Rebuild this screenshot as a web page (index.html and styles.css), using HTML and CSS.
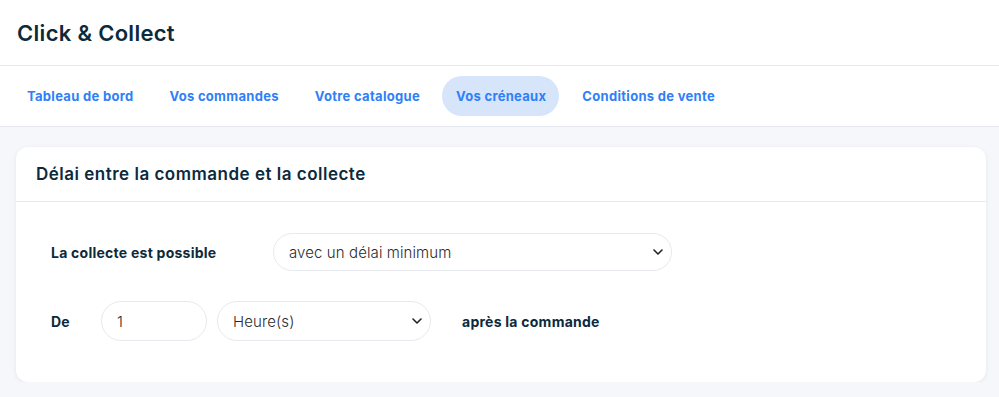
FILE: index.html
```html
<!DOCTYPE html>
<html lang="fr">
<head>
  <meta charset="UTF-8">
  <meta name="viewport" content="width=device-width, initial-scale=1.0">
  <title>Click &amp; Collect</title>
  <link rel="stylesheet" href="styles.css">
</head>
<body>

  <header class="topbar">
    <h1>Click &amp; Collect</h1>
  </header>

  <nav class="tabs">
    <a class="tab" href="#">Tableau de bord</a>
    <a class="tab" href="#">Vos commandes</a>
    <a class="tab" href="#">Votre catalogue</a>
    <a class="tab active" href="#">Vos créneaux</a>
    <a class="tab" href="#">Conditions de vente</a>
  </nav>

  <main class="content">
    <section class="card">
      <div class="card-header">Délai entre la commande et la collecte</div>
      <div class="card-body">
        <div class="row">
          <label class="label label-wide">La collecte est possible</label>
          <div class="select select-wide">
            <span>avec un délai minimum</span>
            <svg class="chevron" viewBox="0 0 10 6" width="10" height="6"><path d="M1 1l4 4 4-4" fill="none" stroke="#222" stroke-width="1.6" stroke-linecap="round" stroke-linejoin="round"/></svg>
          </div>
        </div>
        <div class="row">
          <label class="label label-short">De</label>
          <div class="input">1</div>
          <div class="select select-unit">
            <span>Heure(s)</span>
            <svg class="chevron" viewBox="0 0 10 6" width="10" height="6"><path d="M1 1l4 4 4-4" fill="none" stroke="#222" stroke-width="1.6" stroke-linecap="round" stroke-linejoin="round"/></svg>
          </div>
          <span class="label after">après la commande</span>
        </div>
      </div>
    </section>
  </main>

</body>
</html>
```

FILE: styles.css
```css
body {
  margin: 0;
  font-family: Inter, "Noto Sans", Arial, sans-serif;
  background-color: #f5f7fa;
  color: #0c2a3c;
}
.topbar {
  background-color: #fff;
  height: 65px;
  border-bottom: 1px solid #e8eaee;
  display: flex;
  align-items: center;
  padding: 0 17px;
}
.topbar h1 {
  margin: 0;
  font-size: 22px;
  font-weight: 600;
  letter-spacing: 0.3px;
  color: #0c2a3c;
}
.tabs {
  background-color: #fff;
  height: 60px;
  border-bottom: 1px solid #e6e9ef;
  display: flex;
  align-items: center;
  gap: 9px;
  padding: 0 13px;
}
.tab {
  display: flex;
  align-items: center;
  height: 40px;
  padding: 0 13px 0 14px;
  border-radius: 20px;
  font-size: 13px;
  font-weight: 700;
  letter-spacing: 0.3px;
  color: #2f80f6;
  text-decoration: none;
}
.tab.active {
  background-color: #d7e5fb;
}
.content {
  padding: 20px 13px 0 16px;
}
.card {
  background-color: #fff;
  border-radius: 12px;
  box-shadow: 0 1px 4px rgba(20, 40, 80, 0.08);
}
.card-header {
  height: 54px;
  padding: 0 20px;
  display: flex;
  align-items: center;
  font-size: 17px;
  font-weight: 600;
  letter-spacing: 0.5px;
  border-bottom: 1px solid #e8eaee;
}
.card-body {
  padding: 31px 35px 41px;
  display: flex;
  flex-direction: column;
  gap: 30px;
}
.row {
  display: flex;
  align-items: center;
  gap: 10px;
}
.label {
  font-size: 14px;
  font-weight: 700;
  letter-spacing: 0.25px;
  color: #0c2a3c;
}
.label-wide {
  width: 212px;
}
.label-short {
  width: 40px;
}
.after {
  margin-left: 21px;
}
.select,
.input {
  box-sizing: border-box;
  height: 40px;
  border: 1px solid #e8e9ef;
  border-radius: 20px;
  display: flex;
  align-items: center;
  padding: 0 15px;
  font-size: 15px;
  font-weight: 300;
  letter-spacing: 0.1px;
  color: #2b2b2b;
}
.select {
  justify-content: space-between;
  padding-right: 7px;
}
.select-wide {
  width: 399px;
  height: 38px;
}
.select-unit {
  width: 214px;
}
.input {
  width: 106px;
}
.chevron {
  margin-right: 1px;
}
```
